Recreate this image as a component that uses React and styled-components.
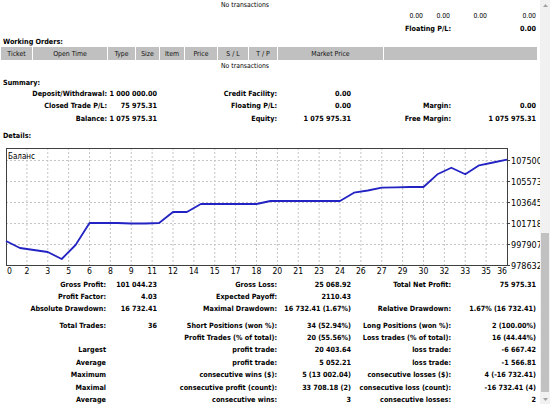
import React from "react";
import styled, { createGlobalStyle } from "styled-components";

const GlobalStyle = createGlobalStyle`
  html, body { margin: 0; padding: 0; background: #fff; overflow: hidden; }
  body { font-family: "DejaVu Sans Condensed", "DejaVu Sans", sans-serif; color: #000; }
`;

const Page = styled.div`
  display: flex;
  width: 550px;
  height: 404px;
  overflow: hidden;
  background: #fff;
`;

const Content = styled.div`
  width: 540px;
  flex: none;
  display: flex;
  flex-direction: column;
  overflow: hidden;
`;

const Row = styled.div`
  display: grid;
  grid-template-columns: ${(p) => p.$cols};
  height: ${(p) => p.$h}px;
  margin-top: ${(p) => p.$mt || 0}px;
  align-items: center;
  flex: none;
`;

const Cell = styled.div`
  text-align: ${(p) => p.$align || "right"};
  font-weight: ${(p) => (p.$bold ? 700 : 400)};
  font-size: ${(p) => (p.$bold ? "7.2px" : "6.8px")};
  white-space: nowrap;
  line-height: 1;
`;

const Title = styled.div`
  height: ${(p) => p.$h}px;
  margin-top: ${(p) => p.$mt || 0}px;
  padding-left: 3px;
  display: flex;
  align-items: center;
  font-weight: 700;
  font-size: 7.2px;
  flex: none;
`;

const HeaderRow = styled.div`
  display: grid;
  grid-template-columns: 31px 74px 27px 23px 24px 32px 30px 28px 105px 153px;
  column-gap: 1px;
  margin-left: 1px;
  height: 13px;
  flex: none;
`;

const HeaderCell = styled.div`
  background: #c0c0c0;
  display: flex;
  align-items: center;
  justify-content: center;
  font-size: 6.9px;
  color: #111;
  white-space: nowrap;
`;

const ChartSvg = styled.svg`
  display: block;
  flex: none;
  width: 540px;
  height: 138px;
  font-family: "DejaVu Sans Condensed", "DejaVu Sans", sans-serif;
`;

const Scrollbar = styled.div`
  width: 10px;
  flex: none;
  background: #f1f1f1;
  display: flex;
  flex-direction: column;
  align-items: center;
`;

const ArrowBtn = styled.div`
  width: 10px;
  height: 10px;
  flex: none;
  display: flex;
  align-items: center;
  justify-content: center;
`;

const Track = styled.div`
  flex: 1;
  display: flex;
  flex-direction: column;
  align-items: center;
`;

const Thumb = styled.div`
  margin-top: 223px;
  width: 8px;
  height: 159px;
  background: #c1c1c1;
`;

const SUM_COLS = "107px 50px 120px 74px 100px 85px";
const STAT_COLS = "106px 51px 120px 74px 100px 85px";

const summary = [
  ["Deposit/Withdrawal:", "1 000 000.00", "Credit Facility:", "0.00", "", ""],
  ["Closed Trade P/L:", "75 975.31", "Floating P/L:", "0.00", "Margin:", "0.00"],
  ["Balance:", "1 075 975.31", "Equity:", "1 075 975.31", "Free Margin:", "1 075 975.31"],
];

const stats1 = [
  ["Gross Profit:", "101 044.23", "Gross Loss:", "25 068.92", "Total Net Profit:", "75 975.31"],
  ["Profit Factor:", "4.03", "Expected Payoff:", "2110.43", "", ""],
  ["Absolute Drawdown:", "16 732.41", "Maximal Drawdown:", "16 732.41 (1.67%)", "Relative Drawdown:", "1.67% (16 732.41)"],
];

const stats2 = [
  ["Total Trades:", "36", "Short Positions (won %):", "34 (52.94%)", "Long Positions (won %):", "2 (100.00%)"],
  ["", "", "Profit Trades (% of total):", "20 (55.56%)", "Loss trades (% of total):", "16 (44.44%)"],
  ["Largest", "", "profit trade:", "20 403.64", "loss trade:", "-6 667.42"],
  ["Average", "", "profit trade:", "5 052.21", "loss trade:", "-1 566.81"],
  ["Maximum", "", "consecutive wins ($):", "5 (13 002.04)", "consecutive losses ($):", "4 (-16 732.41)"],
  ["Maximal", "", "consecutive profit (count):", "33 708.18 (2)", "consecutive loss (count):", "-16 732.41 (4)"],
  ["Average", "", "consecutive wins:", "3", "consecutive losses:", "2"],
];

const balanceY = [
  239, 246, 248, 250, 257, 243, 221, 221, 221, 221.5, 221.5, 221, 210, 210, 202, 202, 202, 202, 202,
  199, 199, 199, 199, 199, 199, 190.7, 188.5, 185.7, 185.3, 185, 185, 172.3, 165.7, 172.3, 163.3,
  160.5, 157.7,
];

const xLabels = [0, 2, 3, 5, 6, 8, 9, 11, 12, 14, 15, 17, 18, 20, 21, 23, 24, 26, 27, 29, 30, 32, 33, 35, 36];
const yLabels = ["1075003", "1055730", "1036456", "1017181", "997907", "978632"];

function Chart() {
  const top = 139;
  const L = 6, R = 507, T = 7, B = 124;
  const gy = [19, 40, 61, 82, 103, 124];
  const step = (R - L) / 24;
  const pts = balanceY
    .map((y, i) => `${(L + (i * (R - L)) / 36).toFixed(2)},${(y - top).toFixed(2)}`)
    .join(" ");
  return (
    <ChartSvg viewBox="0 0 540 138">
      {Array.from({ length: 23 }, (_, k) => {
        const x = L + (k + 1) * step;
        return <line key={"v" + k} x1={x} x2={x} y1={T} y2={B} stroke="#c4c4c4" strokeWidth="1" strokeDasharray="2 2" />;
      })}
      {gy.slice(0, 5).map((y) => (
        <line key={"h" + y} x1={L} x2={R} y1={y + 0.5} y2={y + 0.5} stroke="#c4c4c4" strokeWidth="1" strokeDasharray="2 2" />
      ))}
      {gy.map((y) => (
        <line key={"t" + y} x1={R} x2={R + 3} y1={y + 0.5} y2={y + 0.5} stroke="#404040" strokeWidth="1" />
      ))}
      <rect x={L + 0.5} y={T + 0.5} width={R - L} height={B - T} fill="none" stroke="#404040" strokeWidth="1" />
      <polyline points={pts} fill="none" stroke="#2323c4" strokeWidth="1.8" strokeLinejoin="round" />
      <text x={8} y={15} fontSize="8" dominantBaseline="central" fill="#000">Баланс</text>
      {yLabels.map((t, i) => (
        <text key={t} x={511} y={gy[i] + 0.5} fontSize="9" dominantBaseline="central" fill="#000">{t}</text>
      ))}
      {xLabels.map((t, k) => {
        const x = L + k * step;
        const anchor = k === 0 ? "start" : k === 24 ? "end" : "middle";
        return (
          <text key={"x" + k} x={k === 0 ? x + 1 : x} y={130} fontSize="8.6" textAnchor={anchor} dominantBaseline="central" fill="#000">{t}</text>
        );
      })}
    </ChartSvg>
  );
}

function DataRow({ cols, h, mt, data }) {
  return (
    <Row $cols={cols} $h={h} $mt={mt}>
      {data.map((t, i) => (
        <Cell key={i} $bold>{t}</Cell>
      ))}
    </Row>
  );
}

function UpArrow() {
  return (
    <svg width="5" height="3" viewBox="0 0 5 3"><polygon points="2.5,0 5,3 0,3" fill="#a0a0a0" /></svg>
  );
}
function DownArrow() {
  return (
    <svg width="5" height="3" viewBox="0 0 5 3"><polygon points="0,0 5,0 2.5,3" fill="#a0a0a0" /></svg>
  );
}

export default function App() {
  return (
    <>
      <GlobalStyle />
      <Page>
        <Content>
          <Row $cols="490px" $h={10}>
            <Cell $align="center">No transactions</Cell>
          </Row>
          <Row $cols="384px 39px 27px 37px 49px" $h={12}>
            <Cell />
            <Cell>0.00</Cell>
            <Cell>0.00</Cell>
            <Cell>0.00</Cell>
            <Cell>0.00</Cell>
          </Row>
          <Row $cols="451px 85px" $h={14}>
            <Cell $bold>Floating P/L:</Cell>
            <Cell $bold>0.00</Cell>
          </Row>
          <Title $h={11}>Working Orders:</Title>
          <HeaderRow>
            {["Ticket", "Open Time", "Type", "Size", "Item", "Price", "S / L", "T / P", "Market Price", ""].map((h, i) => (
              <HeaderCell key={i}>{h}</HeaderCell>
            ))}
          </HeaderRow>
          <Row $cols="490px" $h={12}>
            <Cell $align="center">No transactions</Cell>
          </Row>
          <Title $h={10} $mt={5}>Summary:</Title>
          {summary.map((r, i) => (
            <DataRow key={i} cols={SUM_COLS} h={12.5} data={r} />
          ))}
          <Title $h={12} $mt={4.5}>Details:</Title>
          <Chart />
          {stats1.map((r, i) => (
            <DataRow key={i} cols={STAT_COLS} h={12} data={r} />
          ))}
          {stats2.map((r, i) => (
            <DataRow key={i} cols={STAT_COLS} h={12.4} mt={i === 0 ? 4 : 0} data={r} />
          ))}
        </Content>
        <Scrollbar>
          <ArrowBtn><UpArrow /></ArrowBtn>
          <Track><Thumb /></Track>
          <ArrowBtn><DownArrow /></ArrowBtn>
        </Scrollbar>
      </Page>
    </>
  );
}
